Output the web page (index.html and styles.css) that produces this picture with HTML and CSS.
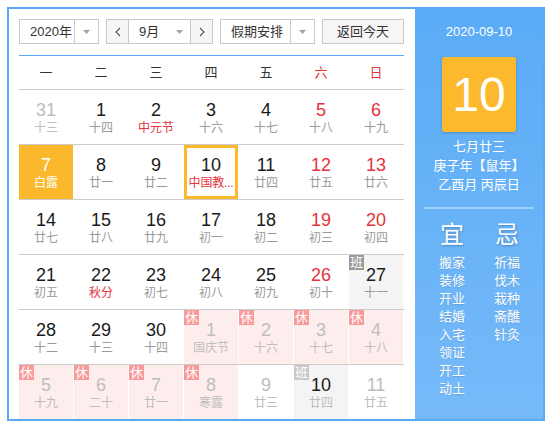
FILE: index.html
```html
<!DOCTYPE html>
<html lang="zh-CN">
<head>
<meta charset="utf-8">
<title>万年历</title>
<link rel="stylesheet" href="styles.css">
</head>
<body>
<div class="cal">
  <div class="main">
    <div class="bar">
      <div class="sel year">
        <span class="txt">2020年</span>
        <span class="arr"><svg width="7" height="4" viewBox="0 0 7 4"><path d="M0 0h7L3.5 4z" fill="#a3a3a3"/></svg></span>
      </div>
      <div class="sel month">
        <span class="nav prev"><svg width="6" height="10" viewBox="0 0 6 10"><path d="M5 1 1 5l4 4" fill="none" stroke="#555" stroke-width="1.1"/></svg></span>
        <span class="mid"><span>9月</span><svg width="7" height="4" viewBox="0 0 7 4"><path d="M0 0h7L3.5 4z" fill="#a3a3a3"/></svg></span>
        <span class="nav next"><svg width="6" height="10" viewBox="0 0 6 10"><path d="M1 1l4 4-4 4" fill="none" stroke="#555" stroke-width="1.1"/></svg></span>
      </div>
      <div class="sel hol">
        <span class="txt">假期安排</span>
        <span class="arr"><svg width="7" height="4" viewBox="0 0 7 4"><path d="M0 0h7L3.5 4z" fill="#a3a3a3"/></svg></span>
      </div>
      <div class="btn">返回今天</div>
    </div>
    <div class="wk">
      <span>一</span><span>二</span><span>三</span><span>四</span><span>五</span><span class="red">六</span><span class="red">日</span>
    </div>
    <div class="grid">
      <div class="c"><div class="d other"><b>31</b><i>十三</i></div></div>
      <div class="c"><div class="d"><b>1</b><i>十四</i></div></div>
      <div class="c"><div class="d"><b>2</b><i class="fest">中元节</i></div></div>
      <div class="c"><div class="d"><b>3</b><i>十六</i></div></div>
      <div class="c"><div class="d"><b>4</b><i>十七</i></div></div>
      <div class="c"><div class="d we"><b>5</b><i>十八</i></div></div>
      <div class="c"><div class="d we"><b>6</b><i>十九</i></div></div>

      <div class="c"><div class="d sel-day"><b>7</b><i>白露</i></div></div>
      <div class="c"><div class="d"><b>8</b><i>廿一</i></div></div>
      <div class="c"><div class="d"><b>9</b><i>廿二</i></div></div>
      <div class="c"><div class="d today"><b>10</b><i class="fest">中国教...</i></div></div>
      <div class="c"><div class="d"><b>11</b><i>廿四</i></div></div>
      <div class="c"><div class="d we"><b>12</b><i>廿五</i></div></div>
      <div class="c"><div class="d we"><b>13</b><i>廿六</i></div></div>

      <div class="c"><div class="d"><b>14</b><i>廿七</i></div></div>
      <div class="c"><div class="d"><b>15</b><i>廿八</i></div></div>
      <div class="c"><div class="d"><b>16</b><i>廿九</i></div></div>
      <div class="c"><div class="d"><b>17</b><i>初一</i></div></div>
      <div class="c"><div class="d"><b>18</b><i>初二</i></div></div>
      <div class="c"><div class="d we"><b>19</b><i>初三</i></div></div>
      <div class="c"><div class="d we"><b>20</b><i>初四</i></div></div>

      <div class="c"><div class="d"><b>21</b><i>初五</i></div></div>
      <div class="c"><div class="d"><b>22</b><i class="fest">秋分</i></div></div>
      <div class="c"><div class="d"><b>23</b><i>初七</i></div></div>
      <div class="c"><div class="d"><b>24</b><i>初八</i></div></div>
      <div class="c"><div class="d"><b>25</b><i>初九</i></div></div>
      <div class="c"><div class="d we"><b>26</b><i>初十</i></div></div>
      <div class="c"><div class="d work"><em class="tag">班</em><b>27</b><i>十一</i></div></div>

      <div class="c"><div class="d"><b>28</b><i>十二</i></div></div>
      <div class="c"><div class="d"><b>29</b><i>十三</i></div></div>
      <div class="c"><div class="d"><b>30</b><i>十四</i></div></div>
      <div class="c"><div class="d rest"><em class="tag">休</em><b>1</b><i>国庆节</i></div></div>
      <div class="c"><div class="d rest"><em class="tag">休</em><b>2</b><i>十六</i></div></div>
      <div class="c"><div class="d rest"><em class="tag">休</em><b>3</b><i>十七</i></div></div>
      <div class="c"><div class="d rest"><em class="tag">休</em><b>4</b><i>十八</i></div></div>

      <div class="c"><div class="d rest"><em class="tag">休</em><b>5</b><i>十九</i></div></div>
      <div class="c"><div class="d rest"><em class="tag">休</em><b>6</b><i>二十</i></div></div>
      <div class="c"><div class="d rest"><em class="tag">休</em><b>7</b><i>廿一</i></div></div>
      <div class="c"><div class="d rest"><em class="tag">休</em><b>8</b><i>寒露</i></div></div>
      <div class="c"><div class="d other"><b>9</b><i>廿三</i></div></div>
      <div class="c"><div class="d work next-work"><em class="tag">班</em><b>10</b><i>廿四</i></div></div>
      <div class="c"><div class="d other"><b>11</b><i>廿五</i></div></div>
    </div>
  </div>
  <div class="side">
    <div class="date">2020-09-10</div>
    <div class="big">10</div>
    <div class="lunar">
      <div>七月廿三</div>
      <div>庚子年【鼠年】</div>
      <div>乙酉月 丙辰日</div>
    </div>
    <div class="sep"></div>
    <div class="yj">
      <div class="col">
        <div class="h">宜</div>
        <div>搬家</div><div>装修</div><div>开业</div><div>结婚</div><div>入宅</div><div>领证</div><div>开工</div><div>动土</div>
      </div>
      <div class="col">
        <div class="h">忌</div>
        <div>祈福</div><div>伐木</div><div>栽种</div><div>斋醮</div><div>针灸</div>
      </div>
    </div>
  </div>
</div>
</body>
</html>
```

FILE: styles.css
```css
* { box-sizing: border-box; }
html, body { margin: 0; padding: 0; background: #fff; }
body {
  font-family: "Liberation Sans", "Noto Sans CJK SC", sans-serif;
  color: #222;
}
.cal {
  margin: 7px;
  width: 538px;
  height: 414px;
  border: 2px solid #5aa9f5;
  display: flex;
}
.main {
  width: 406px;
  padding: 10px 11px 0 10px;
}
.bar {
  display: flex;
  gap: 7px;
  height: 25px;
  margin-bottom: 11px;
  font-size: 13px;
  color: #333;
}
.sel {
  display: flex;
  height: 25px;
  border: 1px solid #c9c9c9;
  background: #fff;
}
.sel .txt {
  flex: 1;
  padding-left: 10px;
  line-height: 23px;
}
.sel .arr {
  width: 24px;
  border-left: 1px solid #c9c9c9;
  display: flex;
  align-items: center;
  justify-content: center;
}
.year { width: 80px; }
.month { width: 107px; }
.hol { width: 95px; }
.nav {
  width: 22px;
  background: #f6f6f6;
  display: flex;
  align-items: center;
  justify-content: center;
}
.prev { border-right: 1px solid #c9c9c9; }
.next { border-left: 1px solid #c9c9c9; }
.mid {
  flex: 1;
  display: flex;
  align-items: center;
  justify-content: space-between;
  padding: 0 7px 0 10px;
  line-height: 23px;
}
.btn {
  width: 82px;
  height: 25px;
  border: 1px solid #c9c9c9;
  background: #f6f6f6;
  text-align: center;
  line-height: 23px;
}
.wk {
  display: grid;
  grid-template-columns: repeat(7, 55px);
  border-top: 1px solid #5aa9f5;
  height: 34px;
  font-size: 13px;
  line-height: 33px;
  color: #333;
}
.wk span { text-align: center; padding-right: 1px; }
.wk .red { color: #e5323b; }
.grid {
  display: grid;
  grid-template-columns: repeat(7, 55px);
  grid-auto-rows: 55px;
}
.c {
  border-top: 1px solid #cccccc;
}
.d {
  position: relative;
  width: 54px;
  height: 54px;
  padding-top: 10px;
  text-align: center;
}
.d b {
  display: block;
  font-weight: normal;
  font-size: 18px;
  line-height: 20px;
  color: #1a1a1a;
}
.d i {
  display: block;
  font-style: normal;
  font-size: 12px;
  line-height: 17px;
  color: #9a9a9a;
  white-space: nowrap;
}
.d i.fest { color: #e5323b; }
.d.we b { color: #e5323b; }
.d.other b, .d.other i { color: #bdbdbd; }
.d.sel-day { background: #fcb82d; }
.d.sel-day b, .d.sel-day i { color: #fff; }
.d.today {
  border: 3px solid #fbb82c;
  padding-top: 7px;
}
.d.today i { letter-spacing: -0.2px; }
.d.rest { background: #fdeded; }
.d.rest b, .d.rest i { color: #bdbdbd; }
.d.work { background: #f4f4f4; }
.d.next-work i { color: #bdbdbd; }
.tag {
  position: absolute;
  left: 0;
  top: 0;
  width: 15px;
  height: 15px;
  font-style: normal;
  font-size: 13px;
  line-height: 15px;
  text-align: center;
  color: #fff;
  background: #f99a9a;
}
.work .tag { background: #9a9a9a; }
.next-work .tag { background: #c8c8c8; }

.side {
  width: 128px;
  background: linear-gradient(#5aabf6, #76baf9);
  color: #fff;
  padding-top: 13px;
  display: flex;
  flex-direction: column;
  align-items: center;
}
.date {
  font-size: 13px;
  line-height: 20px;
}
.big {
  margin-top: 15px;
  width: 74px;
  height: 75px;
  background: #fdb92d;
  border-radius: 3px;
  box-shadow: 0 1px 3px rgba(0, 0, 0, 0.2);
  font-size: 48px;
  line-height: 75px;
  text-align: center;
}
.lunar {
  margin-top: 5px;
  font-size: 13px;
  line-height: 19px;
  text-align: center;
}
.sep {
  margin-top: 13px;
  width: 110px;
  height: 2px;
  background: rgba(255, 255, 255, 0.4);
}
.yj {
  margin-top: 11px;
  display: flex;
  gap: 29px;
  padding-left: 1px;
}
.col {
  width: 26px;
  font-size: 13px;
  line-height: 18px;
  text-align: center;
  text-shadow: 0 1px 1px rgba(0, 0, 0, 0.12);
}
.col .h {
  font-size: 24px;
  line-height: 30px;
  margin: 0 -10px 4px;
  text-shadow: 1px 1px 2px rgba(0, 0, 0, 0.25);
}
```
